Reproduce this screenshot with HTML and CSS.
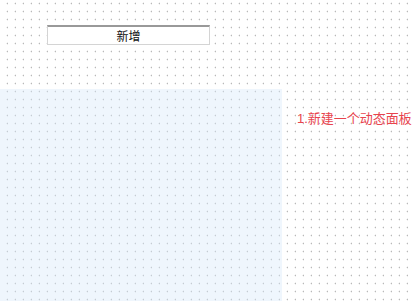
FILE: index.html
```html
<!DOCTYPE html>
<html lang="zh">
<head>
  <meta charset="UTF-8" />
  <title>动态面板</title>
  <link rel="stylesheet" href="styles.css">
</head>
<body>

<main class="canvas">
  <button class="add-btn" type="button">新增</button>

  <div class="stage">
    <div class="panel"></div>
    <p class="note">1.新建一个动态面板</p>
  </div>
</main>

</body>
</html>
```

FILE: styles.css
```css
/* Reset */
* {
  box-sizing: border-box;
}
html, body {
  margin: 0;
  padding: 0;
  height: 100%;
}
body {
  font-family: Arial, "Liberation Sans", "Noto Sans CJK SC", sans-serif;
  color: #333;
  background: #fff;
  overflow: hidden;
}

/* dotted design grid */
.canvas {
  height: 100%;
  padding-top: 25px;
  background-image: radial-gradient(circle at 7.5px 3.5px, #b9b9b9 0.7px, transparent 1.1px);
  background-size: 8px 8px;
}

.add-btn {
  display: block;
  margin-left: 47px;
  width: 163px;
  height: 20px;
  padding: 0;
  background: #fff;
  border: 1px solid #d4d4d4;
  border-top: 2px solid #999;
  font-family: "Noto Sans CJK SC", sans-serif;
  font-size: 12px;
  color: #111;
  line-height: 16px;
  cursor: pointer;
}

.stage {
  display: flex;
  margin-top: 44px;
  height: 212px;
}
.panel {
  width: 282px;
  flex: none;
  background: rgba(214, 232, 250, 0.4);
}
.note {
  margin: 0 0 0 15px;
  padding-top: 19px;
  white-space: nowrap;
  font-family: "Liberation Sans", "Noto Sans CJK SC", sans-serif;
  font-size: 13px;
  color: #e8434d;
}
```
